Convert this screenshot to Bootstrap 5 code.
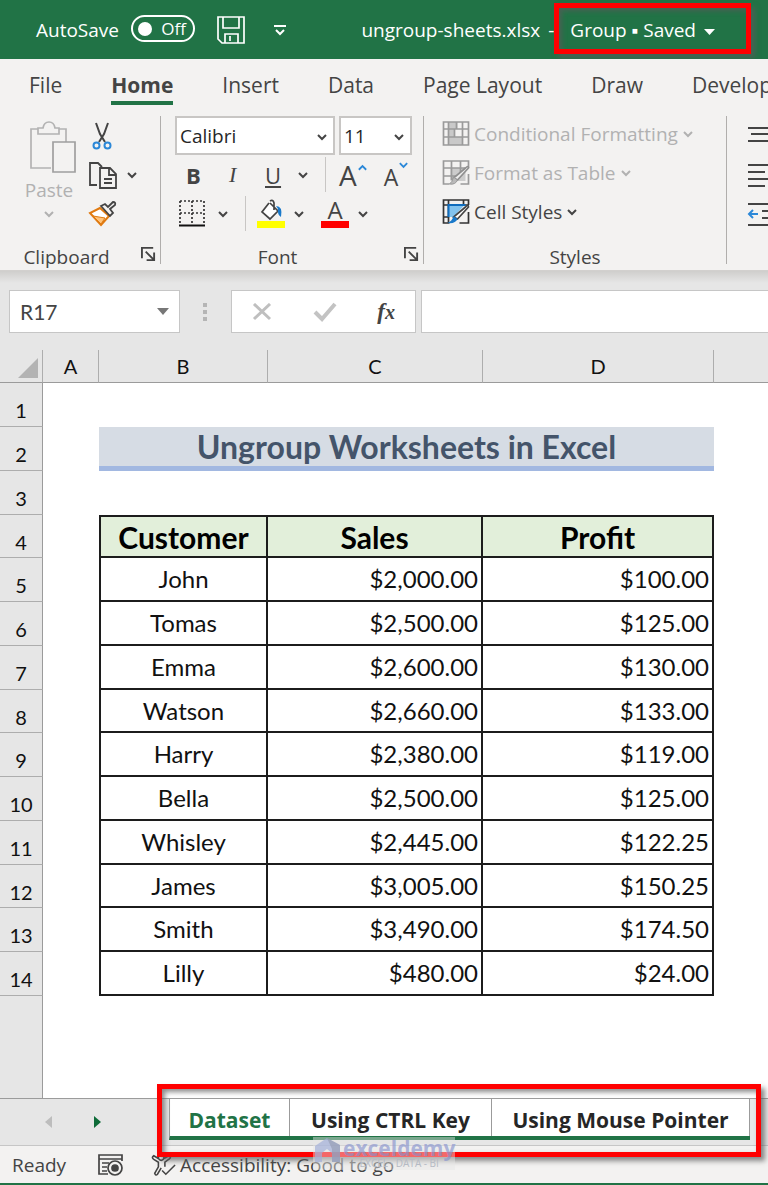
<!DOCTYPE html>
<html lang="en">
<head>
<meta charset="utf-8">
<meta name="viewport" content="width=device-width, initial-scale=1">
<title>ungroup-sheets.xlsx</title>
<link href="https://cdn.jsdelivr.net/npm/bootstrap@5.3.0/dist/css/bootstrap.min.css" rel="stylesheet">
<style>
  body { font-family: "Open Sans", sans-serif; font-size: 19px; line-height: 24px; color: #444; background: #e6e6e6; overflow-x: hidden; }
  button, input, select { font-family: inherit; }
  svg { display: block; flex: none; fill: none; }
  .plain { background: none; border: 0; padding: 0; color: inherit; line-height: 24px; }
  .plain:disabled { color: #b1b1b1; }
  .title-bar { height: 59px; background: #217346; color: #fff; padding-left: 36px; }
  .title-bar .plain { color: #fff; }
  .title-bar .pill { width: 64px; height: 27px; border: 2px solid #fff; border-radius: 14px; font-size: 17px; padding: 0 7px 0 5px; margin: 0 22px 2px 12px; }
  .knob { width: 14px; height: 14px; border-radius: 50%; background: #fff; }
  .callout { border: 5px solid #f00; box-shadow: 4px 4px 5px rgba(90,90,90,.7), inset 3px 3px 5px rgba(90,90,90,.7); pointer-events: none; position: absolute; z-index: 3; }
  .title-bar .doc-state { padding: 0 36px 0 16px; margin-right: 17px; height: 44px; }
  .doc-state .callout { inset: -5px 0 -2px 0; }
  .ribbon-tabs { height: 51px; background: #f3f2f1; padding-left: 29px; gap: 49px; font-size: 21px; }
  .ribbon-tabs a { color: #444; text-decoration: none; white-space: nowrap; line-height: 28px; padding: 12px 0 2px; border-bottom: 4px solid transparent; }
  .ribbon-tabs a.on { font-weight: 700; border-color: #217346; }
  .ribbon { background: #f3f2f1; height: 161px; border-bottom: 1px solid #d2d0ce; padding-top: 6px; }
  .group { height: 148px; border-right: 1px solid #b0aeac; position: relative; flex: none; }
  .tool-row { height: 39px; }
  .group-name { margin-top: 12px; height: 24px; text-align: center; }
  .style-list { padding-left: 18px; margin-top: -2px; margin-bottom: 14px; }
  .launcher { position: absolute; right: 4px; bottom: 0; }
  .combo { height: 39px; border: 2px solid #c8c6c4; background: #fff; position: relative; }
  .combo select { appearance: none; border: 0; background: none; width: 100%; height: 100%; padding: 0 3px; color: #262626; }
  .combo svg { position: absolute; right: 5px; top: 15px; pointer-events: none; }
  .letter { font-size: 22px; text-align: left; }
  .divider { width: 1px; height: 35px; background: #c8c6c4; }
  .formula-bar { height: 79px; padding: 19px 0 17px 9px; background: linear-gradient(#cfcecc, #e6e6e6 12px); }
  .box { height: 43px; background: #fff; border: 1px solid #c6c6c6; }
  .box input { border: 0; background: none; min-width: 0; outline: 0; }
  .name-box { width: 171px; padding: 0 10px; font-size: 21px; }
  .name-box input { color: #444; width: 110px; padding: 0; font-family: Lato, sans-serif; }
  .fx { font-family: "Liberation Serif", serif; font-style: italic; font-weight: 700; font-size: 23px; }
  .sheet { background: linear-gradient(to right, #e6e6e6 42px, #9b9b9b 42px, #9b9b9b 43px, #fff 43px); font-family: Lato, sans-serif; }
  .sheet table { table-layout: fixed; width: 100%; border-collapse: separate; border-spacing: 0; color: #111; font-size: 24px; line-height: 30px; }
  .sheet th, .sheet td { padding: 0; vertical-align: middle; }
  .sheet thead th { background: #e6e6e6; height: 33px; font-size: 20px; font-weight: 400; text-align: center; border-right: 1px solid #adadad; border-bottom: 1px solid #9b9b9b; line-height: 30px; }
  .sheet thead th:last-child { border-right: 0; }
  .sheet tbody tr { height: 44px; }
  .sheet tbody tr:nth-child(4n) { height: 43px; }
  .sheet tbody th[scope=row] { font-weight: 400; font-size: 20px; text-align: center; background: #e6e6e6; border-right: 1px solid #9b9b9b; border-bottom: 1px solid #adadad; padding-top: 11px; }
  .sheet .banner { background: #d6dce4; color: #44546a; font-weight: 700; font-size: 32px; text-align: center; border-bottom: 5px solid #a2b8e1; }
  .sheet .rec td:nth-child(n+3):nth-child(-n+5) { border-right: 2px solid #1c1c1c; border-bottom: 2px solid #1c1c1c; text-align: right; padding-right: 3px; }
  .sheet .rec td:nth-child(3):nth-child(-n+5) { border-left: 2px solid #1c1c1c; text-align: center; padding-right: 0; }
  .sheet .top td:nth-child(n+3):nth-child(-n+5) { border-top: 2px solid #1c1c1c; background: #e2efda; font-weight: 700; font-size: 30px; color: #000; text-align: center; padding-right: 0; }
  .w-rows { width: 43px; } .w-a { width: 56px; } .w-b { width: 169px; } .w-c { width: 215px; } .w-d { width: 231px; }
  .tab-strip { height: 48px; border-top: 1px solid #9b9b9b; border-bottom: 1px solid #c6c6c6; padding-left: 44px; }
  .sheet-tabs { width: 581px; height: 41px; margin-left: 63px; position: relative; background: #fff; border-bottom: 4px solid #217346; border-left: 1px solid #9b9b9b; font-weight: 700; font-size: 21px; }
  .sheet-tabs .callout { inset: -15px -11px -21px -13px; }
  .sheet-tabs a { color: #262626; text-decoration: none; text-align: center; height: 37px; line-height: 42px; border-right: 1px solid #9b9b9b; white-space: nowrap; }
  .sheet-tabs a.on { color: #217346; }
  .status { height: 39px; background: #f3f2f1; border-bottom: 2px solid #217346; padding-left: 12px; position: relative; }
  .watermark { position: absolute; left: 313px; top: -9px; width: 142px; height: 33px; z-index: 4; background: rgba(230,230,230,.45); color: rgba(133,145,205,.65); font-size: 21px; font-weight: 700; line-height: 22px; }
  .watermark small { font-size: 10px; line-height: 8px; color: #b5bac4; font-weight: 400; white-space: nowrap; text-align: center; }
</style>
</head>
<body class="d-flex flex-column min-vh-100">
<svg width="0" height="0" class="position-absolute" aria-hidden="true">
  <symbol id="chev" viewBox="0 0 12 8"><path d="M2 2l4 4 4-4" stroke="currentColor" stroke-width="2"/></symbol>
  <symbol id="launch" viewBox="0 0 16 16"><path d="M1 13V2h12M5 6l8 8M14 7v8H6" stroke="#444" stroke-width="2"/></symbol>
</svg>

<header class="title-bar d-flex align-items-center overflow-hidden">
  <span id="as">AutoSave</span>
  <button class="plain pill d-flex align-items-center justify-content-between" aria-labelledby="as"><span class="knob"></span><span>Off</span></button>
  <button class="plain" aria-label="Save"><svg width="28" height="28" viewBox="0 0 28 28" stroke="#fff" stroke-width="1.7"><path d="M1 1h26v26H5l-4-4zM6 1v11h16V1M8 27v-9h13v9M13 20v5"/></svg></button>
  <button class="plain ms-4 ps-1" aria-label="Customize toolbar"><svg width="14" height="12" viewBox="0 0 14 12" stroke="#fff" stroke-width="2"><path d="M1 2h12M3 6l4 4 4-4"/></svg></button>
  <span class="ms-auto text-nowrap">ungroup-sheets.xlsx</span><span class="ms-2">-</span>
  <button class="plain doc-state d-flex align-items-center position-relative text-nowrap">Group&nbsp;▪&nbsp;Saved<svg class="ms-2 mt-1" width="11" height="6" viewBox="0 0 11 6"><path d="M0 0h11L5.500 6z" fill="#fff"/></svg><span class="callout"></span></button>
</header>

<nav class="ribbon-tabs d-flex align-items-start overflow-hidden" aria-label="Ribbon">
  <a href="#">File</a><a href="#" class="on">Home</a><a href="#">Insert</a><a href="#">Data</a><a href="#">Page Layout</a><a href="#">Draw</a><a href="#">Developer</a>
</nav>

<section class="ribbon d-flex overflow-hidden">
  <div class="group" style="width:161px">
    <div class="d-flex">
      <button class="plain d-flex flex-column align-items-center pt-1" style="width:88px;height:117px;padding-left:10px" disabled>
        <svg class="ms-2" width="48" height="54" viewBox="0 0 48 54" stroke="#b3b3b3" stroke-width="1.700" fill="#ececec"><path d="M22 48H2V9h35v13"/><path d="M9 14V8h5q1-6 6-6t6 6h4v6z" fill="#f3f2f1"/><path d="M24 22h22v30H24z" stroke="#9f9f9f"/></svg>
        <span class="pt-1">Paste</span><svg width="12" height="8" class="mt-2"><use href="#chev"/></svg>
      </button>
      <div>
        <div class="tool-row d-flex align-items-center"><button class="plain ps-1" aria-label="Cut"><svg width="20" height="28" viewBox="0 0 20 28"><path d="M4 1l4 11 5 8M16 1l-4 11-5 8" stroke="#444" stroke-width="2"/><circle cx="4.500" cy="23.500" r="3" stroke="#2b88d8" stroke-width="2"/><circle cx="15.500" cy="23.500" r="3" stroke="#2b88d8" stroke-width="2"/></svg></button></div>
        <div class="tool-row d-flex align-items-center"><button class="plain d-flex align-items-center gap-2" aria-label="Copy"><svg width="30" height="28" viewBox="0 0 30 28" stroke="#444" stroke-width="1.800" fill="#fff"><path d="M9 24H2V2h8l4 4"/><path d="M12 7h10l6 6v14H12zM21 7v7h7M16 18h8M16 22h8"/></svg><svg width="12" height="8"><use href="#chev"/></svg></button></div>
        <div class="tool-row d-flex align-items-center"><button class="plain" aria-label="Format painter"><svg width="30" height="26" viewBox="0 0 30 26"><path d="M12 7L2 12l11 12 8-9z" fill="#fff" stroke="#e07a10" stroke-width="2"/><path d="M5 15l12 2-4 6z" fill="#ffc37a" stroke="#e07a10"/><path d="M13 5l9 10 3-3-3-4 5-4q1-3-2-3l-5 5-3-3z" fill="#f3f2f1" stroke="#444" stroke-width="1.800"/></svg></button></div>
      </div>
    </div>
    <div class="group-name" style="padding-right:27px">Clipboard</div>
    <button class="plain launcher" aria-label="Clipboard options"><svg width="15" height="18" viewBox="0 0 15 18"><use href="#launch" width="15" height="15"/></svg></button>
  </div>

  <div class="group" style="width:263px">
    <div class="tool-row d-flex gap-1" style="padding-left:14px">
      <div class="combo" style="width:160px"><select aria-label="Font"><option>Calibri</option></select><svg width="12" height="8"><use href="#chev"/></svg></div>
      <div class="combo" style="width:73px"><select aria-label="Font size"><option>11</option></select><svg width="12" height="8"><use href="#chev"/></svg></div>
    </div>
    <div class="tool-row d-flex align-items-center" style="padding-left:25px">
      <button class="plain letter fw-bold" style="width:43px">B</button>
      <button class="plain letter fst-italic" style="width:36px;font-family:'Liberation Serif',serif">I</button>
      <button class="plain letter text-decoration-underline" aria-label="Underline">U</button>
      <button class="plain ms-3" aria-label="Underline style"><svg width="12" height="8"><use href="#chev"/></svg></button>
      <span class="divider ms-3" style="margin-right:13px"></span>
      <button class="plain d-flex" aria-label="Increase font size"><span style="font-size:28px">A</span><svg width="11" height="8" viewBox="0 0 12 8"><path d="M2 7l4-4 4 4" stroke="#2b88d8" stroke-width="2"/></svg></button>
      <button class="plain d-flex ms-3" aria-label="Decrease font size"><span class="pt-1" style="font-size:23px">A</span><svg width="11" height="8" viewBox="0 0 12 8"><path d="M2 2l4 4 4-4" stroke="#2b88d8" stroke-width="2"/></svg></button>
    </div>
    <div class="tool-row d-flex align-items-center" style="padding-left:18px">
      <button class="plain" aria-label="Borders"><svg width="26" height="27" viewBox="0 0 26 27" fill="#fff"><path d="M1 1h24v24M1 1v24M13 1v24M1 13h24" stroke="#333" stroke-width="1.700" stroke-dasharray="2 2"/><path d="M0 25.500h26" stroke="#111" stroke-width="2"/></svg></button>
      <button class="plain" style="margin-left:12px" aria-label="Border style"><svg width="12" height="8"><use href="#chev"/></svg></button>
      <span class="divider ms-3" style="margin-right:11px"></span>
      <button class="plain" aria-label="Fill color"><svg width="28" height="29" viewBox="0 0 28 29"><path d="M12 4l-7 9 8 7 8-8-8-8M13 2q3-2 4 2v7" stroke="#444" stroke-width="1.700" fill="#fff"/><path d="M19 7q7 0 5 11-4-3-3-8" fill="#1979ca"/><path d="M0 22h28v7H0z" fill="#ff0"/></svg></button>
      <button class="plain ms-2" aria-label="Fill palette"><svg width="12" height="8"><use href="#chev"/></svg></button>
      <button class="plain d-flex flex-column align-items-center ms-3" style="border-bottom:7px solid #f00;width:28px;font-size:24px;line-height:22px" aria-label="Font color">A</button>
      <button class="plain ms-2" aria-label="Font palette"><svg width="12" height="8"><use href="#chev"/></svg></button>
    </div>
    <div class="group-name" style="padding-right:29px">Font</div>
    <button class="plain launcher" aria-label="Font options"><svg width="15" height="18" viewBox="0 0 15 18"><use href="#launch" width="15" height="15"/></svg></button>
  </div>

  <div class="group" style="width:303px">
    <div class="style-list">
      <div class="tool-row d-flex align-items-center"><button class="plain d-flex align-items-center gap-1" disabled><svg width="28" height="25" viewBox="0 0 27 25"><path d="M6 1h9v7H6zM6 8h6v8H6zM6 16h14v8H6z" fill="#c9c9c9"/><path d="M1 1h25v23H1zM1 8h25M1 16h25M6 1v23M20 1v23M14 1v7M12 8v8" stroke="#9a9a9a" stroke-width="1.700"/></svg><span>Conditional Formatting</span><svg width="12" height="8"><use href="#chev"/></svg></button></div>
      <div class="tool-row d-flex align-items-center"><button class="plain d-flex align-items-center gap-1" disabled><svg width="28" height="25" viewBox="0 0 27 25"><path d="M8 8h15v13H8z" fill="#ccc"/><path d="M1 20V1h25v7M26 14v10h-8M1 8h22M1 16h14M9 1v19M18 1v12M1 20v4h6" stroke="#9a9a9a" stroke-width="1.700"/><path d="M26 8L15 20l-4-2L23 8q3-3 3 0z" fill="#eee" stroke="#8f8f8f" stroke-width="1.700"/><path d="M11 17l4 3q-2 5-8 4 3-2 4-7z" fill="#b9b9b9" stroke="#999"/></svg><span>Format as Table</span><svg width="12" height="8"><use href="#chev"/></svg></button></div>
      <div class="tool-row d-flex align-items-center"><button class="plain d-flex align-items-center gap-1"><svg width="28" height="25" viewBox="0 0 27 25"><path d="M7 24H1V1h25v5M26 13v11h-9M1 6h25M1 18h6M6 1v23M21 1v5" stroke="#333" stroke-width="1.700"/><path d="M6 18V6h16l-11 12z" fill="#83c3ee"/><path d="M6 18V6h17" stroke="#0f6cbd" stroke-width="2"/><path d="M26 8L15 20l-4-2L23 8q3-3 3 0z" fill="#fff" stroke="#444" stroke-width="1.700"/><path d="M11 17l4 3q-2 5-10 4 5-2 6-7z" fill="#1979ca"/></svg><span>Cell Styles</span><svg width="12" height="8"><use href="#chev"/></svg></button></div>
    </div>
    <div class="group-name">Styles</div>
  </div>

  <div class="ps-3 ms-1">
    <div class="tool-row d-flex"><button class="plain" aria-label="Top align"><svg width="28" height="28" viewBox="0 0 28 28" stroke="#444" stroke-width="2"><path d="M1 6h27M4 12h24M1 19h27"/></svg></button></div>
    <div class="tool-row d-flex align-items-center"><button class="plain" aria-label="Align left"><svg width="28" height="28" viewBox="0 0 28 28" stroke="#444" stroke-width="2"><path d="M1 4h27M1 11h17M1 18h27M1 25h17"/></svg></button></div>
    <div class="tool-row d-flex align-items-center"><button class="plain" aria-label="Decrease indent"><svg width="28" height="28" viewBox="0 0 28 28" stroke="#444" stroke-width="2"><path d="M1 4h27M15 11h13M15 18h13M1 25h27"/><path d="M11 14H2M6 10l-4 4 4 4" stroke="#2b88d8"/></svg></button></div>
  </div>
</section>

<section class="formula-bar d-flex overflow-hidden">
  <div class="box name-box d-flex align-items-center justify-content-between"><input value="R17" aria-label="Name box"><svg width="12" height="7" viewBox="0 0 12 7"><path d="M0 0h12L6 7z" fill="#777"/></svg></div>
  <svg class="mt-2" style="margin:0 24px 0 23px" width="4" height="26" viewBox="0 0 4 26"><path d="M0 5h4v4H0zM0 12h4v4H0zM0 19h4v4H0z" fill="#b5b5b5"/></svg>
  <div class="box d-flex align-items-center justify-content-between" style="width:185px;padding:0 20px">
    <button class="plain" aria-label="Cancel"><svg width="20" height="18" viewBox="0 0 20 18"><path d="M2 1l16 15M18 1L2 16" stroke="#bfbfbf" stroke-width="3"/></svg></button>
    <button class="plain" aria-label="Enter"><svg width="24" height="20" viewBox="0 0 24 20"><path d="M2 10l7 7L22 2" stroke="#c3c3c3" stroke-width="4"/></svg></button>
    <button class="plain fx" aria-label="Insert function">f<small>x</small></button>
  </div>
  <div class="box flex-grow-1 border-end-0" style="margin-left:5px"><input class="w-100 h-100" aria-label="Formula"></div>
</section>

<main class="sheet flex-grow-1">
  <table>
    <colgroup><col class="w-rows"><col class="w-a"><col class="w-b"><col class="w-c"><col class="w-d"><col></colgroup>
    <thead><tr><th aria-label="Select all"><svg class="ms-auto me-1 mt-1" width="20" height="20" viewBox="0 0 20 20"><path d="M20 0v20H0z" fill="#b3b3b3"/></svg></th><th scope="col">A</th><th scope="col">B</th><th scope="col">C</th><th scope="col">D</th><th></th></tr></thead>
    <tbody>
      <tr><th scope="row">1</th><td></td><td></td><td></td><td></td><td></td></tr>
      <tr><th scope="row">2</th><td></td><td class="banner" colspan="3">Ungroup Worksheets in Excel</td><td></td></tr>
      <tr><th scope="row">3</th><td></td><td></td><td></td><td></td><td></td></tr>
      <tr class="rec top"><th scope="row">4</th><td></td><td>Customer</td><td>Sales</td><td>Profit</td><td></td></tr>
      <tr class="rec"><th scope="row">5</th><td></td><td>John</td><td>$2,000.00</td><td>$100.00</td><td></td></tr>
      <tr class="rec"><th scope="row">6</th><td></td><td>Tomas</td><td>$2,500.00</td><td>$125.00</td><td></td></tr>
      <tr class="rec"><th scope="row">7</th><td></td><td>Emma</td><td>$2,600.00</td><td>$130.00</td><td></td></tr>
      <tr class="rec"><th scope="row">8</th><td></td><td>Watson</td><td>$2,660.00</td><td>$133.00</td><td></td></tr>
      <tr class="rec"><th scope="row">9</th><td></td><td>Harry</td><td>$2,380.00</td><td>$119.00</td><td></td></tr>
      <tr class="rec"><th scope="row">10</th><td></td><td>Bella</td><td>$2,500.00</td><td>$125.00</td><td></td></tr>
      <tr class="rec"><th scope="row">11</th><td></td><td>Whisley</td><td>$2,445.00</td><td>$122.25</td><td></td></tr>
      <tr class="rec"><th scope="row">12</th><td></td><td>James</td><td>$3,005.00</td><td>$150.25</td><td></td></tr>
      <tr class="rec"><th scope="row">13</th><td></td><td>Smith</td><td>$3,490.00</td><td>$174.50</td><td></td></tr>
      <tr class="rec"><th scope="row">14</th><td></td><td>Lilly</td><td>$480.00</td><td>$24.00</td><td></td></tr>
    </tbody>
  </table>
</main>

<footer>
  <div class="tab-strip d-flex">
    <button class="plain" aria-label="Previous sheet"><svg width="9" height="12" viewBox="0 0 9 12"><path d="M8 0v12L1 6z" fill="#bdbdbd"/></svg></button>
    <button class="plain ms-4 me-1 ps-3" aria-label="Next sheet"><svg width="9" height="12" viewBox="0 0 9 12"><path d="M1 0v12l7-6z" fill="#0e6b38"/></svg></button>
    <nav class="sheet-tabs d-flex flex-shrink-0" aria-label="Sheets"><a href="#" class="on" style="width:120px">Dataset</a><a href="#" style="width:202px">Using CTRL Key</a><a href="#" class="flex-grow-1">Using Mouse Pointer</a><span class="callout"></span></nav>
  </div>
  <div class="status d-flex align-items-center">
    <span>Ready</span>
    <svg style="margin:0 28px 0 32px" width="25" height="22" viewBox="0 0 25 22" stroke="#444" stroke-width="1.700"><path d="M10 20H1V1h23v6M1 5h23M4 9h7M4 13h5M4 17h5"/><circle cx="17" cy="14" r="7"/><circle cx="17" cy="14" r="3" fill="#444"/></svg>
    <svg class="me-1" width="25" height="24" viewBox="0 0 27 24" stroke="#444" stroke-width="1.700"><circle cx="11" cy="4" r="3"/><path d="M8 5L3 2Q0 4 3 6l5 3v5l-4 7q1 3 3 1l4-7M14 5l5-3q4 2 0 4l-4 3v5M12 18l4 4 10-10"/></svg>
    <span>Accessibility: Good to go</span>
    <div class="watermark d-flex" aria-hidden="true"><svg width="30" height="33" viewBox="0 0 30 33"><path d="M2 9L14 1l13 7v17H19v-9l-5-4-5 4v9H2z" fill="#a3afd9" fill-opacity=".7"/><path d="M14 1l13 7v17h-8V12z" fill="#8b92a5" fill-opacity=".5"/></svg><div>exceldemy<small class="d-block">EXCEL · DATA - BI</small></div></div>
  </div>
</footer>
<script src="https://cdn.jsdelivr.net/npm/bootstrap@5.3.0/dist/js/bootstrap.bundle.min.js"></script>
</body>
</html>
